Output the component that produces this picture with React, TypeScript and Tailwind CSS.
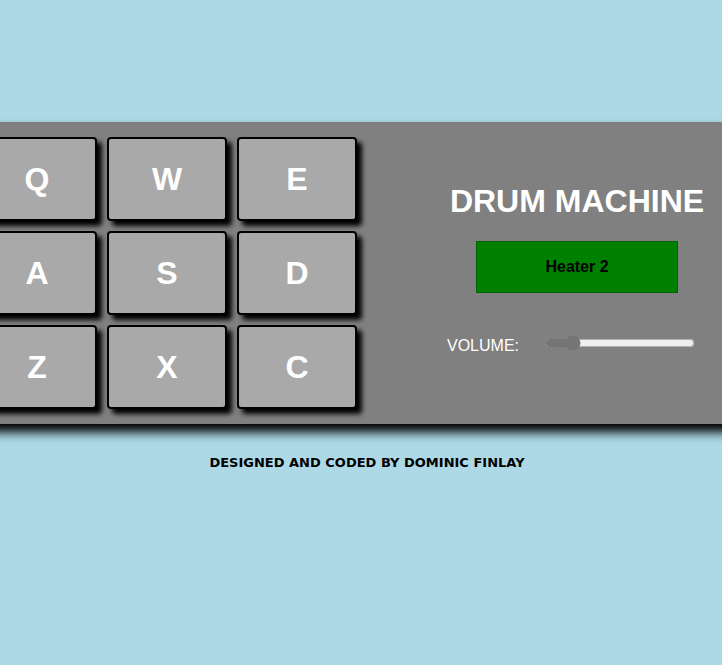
import { useState } from "react";

const pads = ["Q", "W", "E", "A", "S", "D", "Z", "X", "C"];

function DrumPad({ letter }: { letter: string }) {
  return (
    <button
      type="button"
      className="flex h-[84px] items-center justify-center rounded-[4px] border-2 border-black bg-[#a9a9a9] text-[32px] font-bold text-white shadow-[5px_5px_5px_#000]"
    >
      {letter}
    </button>
  );
}

function Controls() {
  const [volume, setVolume] = useState(15);
  return (
    <section className="flex w-[260px] flex-col items-center pt-[46px]">
      <h1 className="text-[32px] leading-9 font-bold whitespace-nowrap text-white">DRUM MACHINE</h1>
      <output className="mt-[22px] flex h-[52px] w-[202px] items-center justify-center border border-[#006400] bg-[#008000] text-base font-bold text-black">
        Heater 2
      </output>
      <div className="mt-[41px] flex w-full items-start justify-between pr-3">
        <label htmlFor="volume" className="text-base text-white">
          VOLUME:
        </label>
        <input
          id="volume"
          type="range"
          min={0}
          max={100}
          value={volume}
          onChange={(e) => setVolume(Number(e.target.value))}
          className="mt-px h-4 w-[150px] accent-[#757575]"
        />
      </div>
    </section>
  );
}

export default function App() {
  return (
    <div className="flex min-h-screen flex-col items-center overflow-hidden bg-[#add8e6] pt-[122px] font-['Liberation_Sans',Arial,sans-serif]">
      <main className="flex w-[800px] shrink-0 justify-between bg-[#808080] py-[15px] pr-[54px] pl-4 shadow-[5px_8px_10px_#000]">
        <div className="grid w-[380px] grid-cols-3 gap-[10px]">
          {pads.map((letter) => (
            <DrumPad key={letter} letter={letter} />
          ))}
        </div>
        <Controls />
      </main>
      <footer className="mt-[29px] ml-3 font-['DejaVu_Sans',sans-serif] text-[13px] leading-5 font-bold text-black">
        DESIGNED AND CODED BY DOMINIC FINLAY
      </footer>
    </div>
  );
}
